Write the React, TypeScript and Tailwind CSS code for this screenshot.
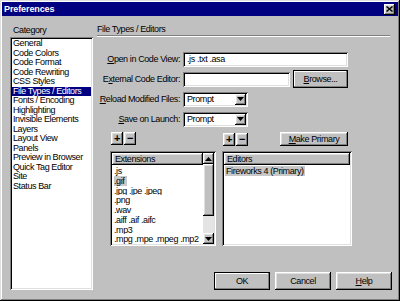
const CATEGORIES = [
  "General",
  "Code Colors",
  "Code Format",
  "Code Rewriting",
  "CSS Styles",
  "File Types / Editors",
  "Fonts / Encoding",
  "Highlighting",
  "Invisible Elements",
  "Layers",
  "Layout View",
  "Panels",
  "Preview in Browser",
  "Quick Tag Editor",
  "Site",
  "Status Bar",
];

const EXTENSIONS = [".js", ".gif", ".jpg .jpe .jpeg", ".png", ".wav", ".aiff .aif .aifc", ".mp3", ".mpg .mpe .mpeg .mp2"];

const raised =
  "bg-[#c0c0c0] shadow-[inset_-1px_-1px_#000,inset_1px_1px_#fff,inset_-2px_-2px_#808080,inset_2px_2px_#dfdfdf]";
const raisedDefault =
  "bg-[#c0c0c0] shadow-[inset_0_0_0_1px_#000,inset_-2px_-2px_#808080,inset_2px_2px_#fff]";
const sunken =
  "bg-white shadow-[inset_1px_1px_#808080,inset_-1px_-1px_#fff,inset_2px_2px_#000,inset_-2px_-2px_#dfdfdf]";

function Btn({ children, w, h = "h-[18px]", isDefault = false }: { children: React.ReactNode; w: string; h?: string; isDefault?: boolean }) {
  return (
    <div className={`${w} ${h} ${isDefault ? raisedDefault : raised} flex items-center justify-center leading-none`}>
      {children}
    </div>
  );
}

function Arrow({ up = false }: { up?: boolean }) {
  return (
    <svg width="7" height="4" viewBox="0 0 7 4">
      <polygon points={up ? "3.5,0 7,4 0,4" : "0,0 7,0 3.5,4"} fill="#000" />
    </svg>
  );
}

function Select({ value }: { value: string }) {
  return (
    <div className={`w-[65px] h-[15px] ${sunken} flex items-center pl-[4px] pr-[2px]`}>
      <span className="flex-1 leading-none">{value}</span>
      <div className={`w-[11px] h-[11px] ${raised} flex items-center justify-center`}>
        <Arrow />
      </div>
    </div>
  );
}

function Row({ label, children }: { label: React.ReactNode; children: React.ReactNode }) {
  return (
    <div className="h-[20px] flex items-center">
      <div className="w-[84px] text-right pr-[1px] leading-none whitespace-nowrap">{label}</div>
      <div className="ml-[2px] flex items-center">{children}</div>
    </div>
  );
}

function PlusMinus() {
  return (
    <div className="flex gap-[1px]">
      <Btn w="w-[12px]" h="h-[13px]">
        <span className="font-bold text-[11px]">+</span>
      </Btn>
      <Btn w="w-[12px]" h="h-[13px]">
        <span className="font-bold text-[11px]">−</span>
      </Btn>
    </div>
  );
}

export default function App() {
  return (
    <div
      className="w-[400px] h-[301px] bg-[#c0c0c0] p-[2px] text-[9px] tracking-[-0.4px] text-black shadow-[inset_-1px_-1px_#000,inset_1px_1px_#dfdfdf,inset_-2px_-2px_#808080,inset_2px_2px_#fff] overflow-hidden"
      style={{ fontFamily: '"Liberation Sans", Arial, sans-serif' }}
    >
      {/* title bar */}
      <div className="h-[14px] bg-[#000080] flex items-center justify-between pl-[2px] pr-[3px]">
        <span className="text-white font-bold text-[9px] tracking-[-0.1px] leading-none">Preferences</span>
        <div className={`w-[11px] h-[11px] ${raised} flex items-center justify-center`}>
          <svg width="7" height="6" viewBox="0 0 7 6">
            <path d="M0.5 0.5 L6.5 5.5 M6.5 0.5 L0.5 5.5" stroke="#000" strokeWidth="1.4" />
          </svg>
        </div>
      </div>

      <div className="flex pl-[8px]">
        {/* category column */}
        <div className="w-[83px]">
          <div className="h-[21px] pt-[8px] pl-[3px] leading-[12px]">Category</div>
          <div className={`h-[253px] ${sunken} p-[2px]`}>
            {CATEGORIES.map((c, i) => (
              <div
                key={c}
                className={`h-[9.5px] leading-[9.5px] pl-[1px] whitespace-nowrap ${i === 5 ? "bg-[#000080] text-white" : ""}`}
              >
                {c}
              </div>
            ))}
          </div>
        </div>

        {/* settings column */}
        <div className="ml-[4px] w-[295px] flex flex-col">
          <div className="h-[19px] pt-[7px] leading-[12px]">File Types / Editors</div>
          <div className="w-[293px] border-t border-[#808080] border-b border-b-white" />

          <div className="mt-[12px]">
            <Row label={<><span className="underline">O</span>pen in Code View:</>}>
              <div className={`w-[165px] h-[15px] ${sunken} flex items-center pl-[4px] leading-none`}>.js .txt .asa</div>
            </Row>
            <Row label={<>E<span className="underline">x</span>ternal Code Editor:</>}>
              <div className={`w-[107px] h-[15px] ${sunken}`} />
              <div className="ml-[3px]">
                <Btn w="w-[55px]" isDefault>
                  <span>
                    <span className="underline">B</span>rowse...
                  </span>
                </Btn>
              </div>
            </Row>
            <Row label={<><span className="underline">R</span>eload Modified Files:</>}>
              <Select value="Prompt" />
            </Row>
            <Row label={<><span className="underline">S</span>ave on Launch:</>}>
              <Select value="Prompt" />
            </Row>
          </div>

          <div className="ml-[13px] mt-[3px] flex gap-[6px]">
            {/* extensions */}
            <div className="w-[106px] flex flex-col">
              <div className="pl-[1px] h-[14px]">
                <PlusMinus />
              </div>
              <div className={`mt-[5px] h-[95px] ${sunken} p-[2px] flex`}>
                <div className="flex-1 flex flex-col">
                  <div className={`h-[12px] ${raised} pl-[3px] leading-[12px] mb-[1px]`}>Extensions</div>
                  {EXTENSIONS.map((e, i) => (
                    <div key={e} className="h-[10px] leading-[10px] pl-[2px] whitespace-nowrap overflow-hidden">
                      <span className={i === 1 ? "bg-[#c8c8c8] pr-[3px]" : ""}>{e}</span>
                    </div>
                  ))}
                </div>
                <div className="w-[11px] flex flex-col">
                  <div className={`h-[11px] ${raised} flex items-center justify-center`}>
                    <Arrow up />
                  </div>
                  <div className={`h-[52px] ${raised}`} />
                  <div className="h-[17px] bg-[#e4e4e4]" />
                  <div className={`h-[11px] ${raised} flex items-center justify-center`}>
                    <Arrow />
                  </div>
                </div>
              </div>
            </div>

            {/* editors */}
            <div className="w-[130px] flex flex-col">
              <div className="pl-[1px] pr-[4px] h-[14px] flex items-center justify-between">
                <PlusMinus />
                <Btn w="w-[68px]" h="h-[14px]">
                  <span>
                    <span className="underline">M</span>ake Primary
                  </span>
                </Btn>
              </div>
              <div className={`mt-[5px] h-[95px] ${sunken} p-[2px] flex flex-col`}>
                <div className={`h-[12px] ${raised} pl-[3px] leading-[12px] mb-[1px]`}>Editors</div>
                <div className="h-[10px] leading-[10px] pl-[1px]">
                  <span className="bg-[#c8c8c8] px-[1px]">Fireworks 4 (Primary)</span>
                </div>
              </div>
            </div>
          </div>

          <div className="mt-[26px] flex justify-end gap-[5px]">
            <Btn w="w-[56px]" isDefault>OK</Btn>
            <Btn w="w-[56px]">Cancel</Btn>
            <Btn w="w-[56px]">
              <span>
                <span className="underline">H</span>elp
              </span>
            </Btn>
          </div>
        </div>
      </div>
    </div>
  );
}
